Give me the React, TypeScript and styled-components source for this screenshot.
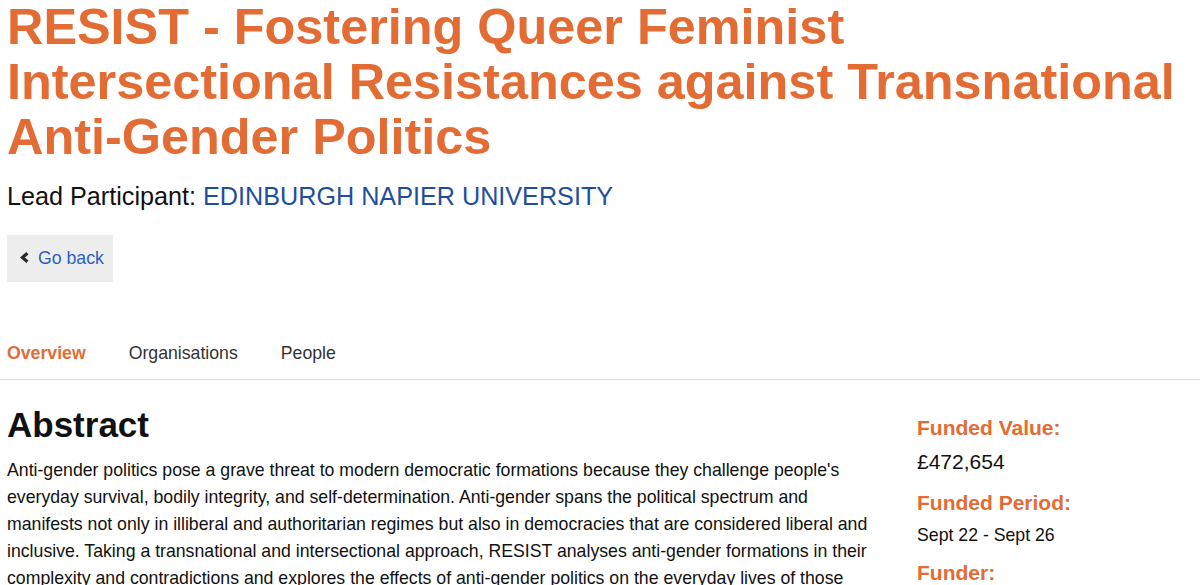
import React from "react";
import styled, { createGlobalStyle } from "styled-components";

const orange = "#e36c34";

const GlobalStyle = createGlobalStyle`
	html, body {
		margin: 0;
		padding: 0;
		background: #fff;
	}
	body {
		font-family: "Liberation Sans", Arial, Helvetica, sans-serif;
		color: #111;
	}
`;

const Page = styled.div`
	display: flex;
	flex-direction: column;
`;

const Header = styled.header`
	padding: 0 7px;
	display: flex;
	flex-direction: column;
	align-items: flex-start;
`;

const Title = styled.h1`
	margin: -1px 0 0;
	font-size: 50.4px;
	line-height: 55px;
	font-weight: 700;
	color: ${orange};
`;

const Lead = styled.p`
	margin: 17px 0 0;
	font-size: 25.2px;
	line-height: 30px;
	color: #111;
`;

const LeadLink = styled.a`
	color: #1f4f9c;
	text-decoration: none;
`;

const BackButton = styled.a`
	margin-top: 24px;
	display: flex;
	align-items: center;
	gap: 9px;
	box-sizing: border-box;
	width: 106px;
	height: 47px;
	padding-left: 13px;
	background: #ededed;
	color: #2f5fc0;
	font-size: 17.7px;
	text-decoration: none;
`;

const ChevronIcon = styled.svg`
	flex: none;
	width: 9px;
	height: 11px;
	margin-top: -3px;
`;

const Tabs = styled.nav`
	margin-top: 58px;
	display: flex;
	gap: 43px;
	padding: 0 7px 12px;
	border-bottom: 1.5px solid #dcdcdc;
`;

const Tab = styled.a<{ active?: boolean }>`
	font-size: 17.7px;
	line-height: 27px;
	font-weight: ${({ active }) => (active ? 700 : 400)};
	color: ${({ active }) => (active ? orange : "#333")};
	text-decoration: none;
`;

const Content = styled.main`
	display: grid;
	grid-template-columns: 868px 1fr;
	column-gap: 42px;
	padding: 25px 7px 0;
`;

const Heading = styled.h2`
	margin: 0;
	font-size: 35px;
	line-height: 40px;
	font-weight: 700;
	color: #111;
`;

const Body = styled.p`
	margin: 12px 0 0;
	font-size: 17.7px;
	line-height: 27px;
	color: #111;
`;

const Side = styled.aside`
	padding-top: 10px;
	display: flex;
	flex-direction: column;
`;

const Label = styled.h3<{ gap?: number }>`
	margin: ${({ gap }) => gap ?? 0}px 0 0;
	font-size: 21px;
	line-height: 26px;
	font-weight: 700;
	color: ${orange};
`;

const Value = styled.div<{ big?: boolean; gap?: number }>`
	margin-top: ${({ gap }) => gap ?? 0}px;
	font-size: ${({ big }) => (big ? "21px" : "17.7px")};
	line-height: ${({ big }) => (big ? "26px" : "27px")};
	color: #111;
`;

// bold chevron-left, like the icon font glyph
const Chevron = () => (
	<ChevronIcon viewBox="0 0 9 11">
		<path d="M7.4 1.2 L2.4 5.5 L7.4 9.8" fill="none" stroke="#2b2b2b" strokeWidth="3.2" strokeLinejoin="miter" />
	</ChevronIcon>
);

export default function App() {
	return (
		<Page>
			<GlobalStyle />
			<Header>
				<Title>
					RESIST - Fostering Queer Feminist
					<br />
					Intersectional Resistances against Transnational
					<br />
					Anti-Gender Politics
				</Title>
				<Lead>
					Lead Participant: <LeadLink href="#">EDINBURGH NAPIER UNIVERSITY</LeadLink>
				</Lead>
				<BackButton href="#">
					<Chevron />
					Go back
				</BackButton>
			</Header>
			<Tabs>
				<Tab active href="#">Overview</Tab>
				<Tab href="#">Organisations</Tab>
				<Tab href="#">People</Tab>
			</Tabs>
			<Content>
				<section>
					<Heading>Abstract</Heading>
					<Body>
						Anti-gender politics pose a grave threat to modern democratic formations because they challenge people's
						everyday survival, bodily integrity, and self-determination. Anti-gender spans the political spectrum and
						manifests not only in illiberal and authoritarian regimes but also in democracies that are considered liberal and
						inclusive. Taking a transnational and intersectional approach, RESIST analyses anti-gender formations in their
						complexity and contradictions and explores the effects of anti-gender politics on the everyday lives of those
					</Body>
				</section>
				<Side>
					<Label>Funded Value:</Label>
					<Value big gap={8}>£472,654</Value>
					<Label gap={15}>Funded Period:</Label>
					<Value gap={6}>Sept 22 - Sept 26</Value>
					<Label gap={11}>Funder:</Label>
				</Side>
			</Content>
		</Page>
	);
}
